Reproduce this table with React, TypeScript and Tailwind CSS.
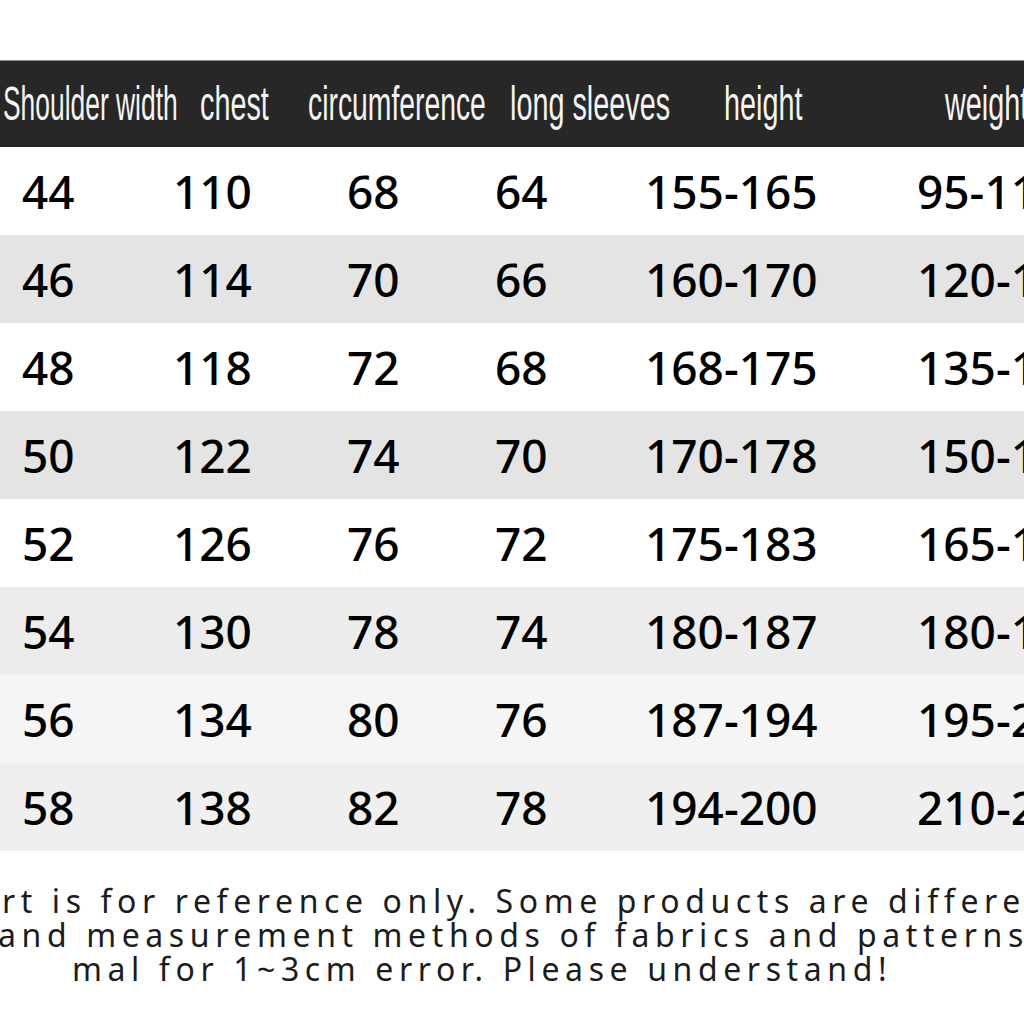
import React from 'react';

// Size chart (cropped view of a wider table)

const headers = [
  { label: 'Shoulder width', cell: 'w-[197px]', scale: 'scale-x-[0.55]' },
  { label: 'chest', cell: 'w-[108px]', scale: 'scale-x-[0.6]' },
  { label: 'circumference', cell: 'w-[202px]', scale: 'scale-x-[0.59]' },
  { label: 'long sleeves', cell: 'w-[214px]', scale: 'scale-x-[0.6]' },
  { label: 'height', cell: 'w-[221px]', scale: 'scale-x-[0.6]' },
  { label: 'weight', cell: 'w-[200px]', scale: 'scale-x-[0.6]' },
];

const colWidths = ['w-[151px]', 'w-[174px]', 'w-[148px]', 'w-[150px]', 'w-[272px]', 'w-[200px]'];

const rows = [
  { bg: 'bg-white', cells: ['44', '110', '68', '64', '155-165', '95-110'] },
  { bg: 'bg-[#e4e4e4]', cells: ['46', '114', '70', '66', '160-170', '120-135'] },
  { bg: 'bg-white', cells: ['48', '118', '72', '68', '168-175', '135-150'] },
  { bg: 'bg-[#e4e4e4]', cells: ['50', '122', '74', '70', '170-178', '150-165'] },
  { bg: 'bg-white', cells: ['52', '126', '76', '72', '175-183', '165-180'] },
  { bg: 'bg-[#ececec]', cells: ['54', '130', '78', '74', '180-187', '180-195'] },
  { bg: 'bg-[#f5f5f5]', cells: ['56', '134', '80', '76', '187-194', '195-210'] },
  { bg: 'bg-[#efefef]', cells: ['58', '138', '82', '78', '194-200', '210-225'] },
];

export default function App() {
  return (
    <div className="w-[1024px] h-[1024px] overflow-hidden bg-white">
      <div className="h-[60px]" />

      {/* header bar */}
      <div className="flex items-center h-[87px] pl-[3px] bg-[#272727] border-t border-[#8c8c8c] whitespace-nowrap">
        {headers.map(h => (
          <div key={h.label} className={`${h.cell} shrink-0`}>
            <span
              className={`inline-block origin-left ${h.scale} text-[48px] leading-none text-[#f4f4f4] [font-family:'Liberation_Sans',Arial,sans-serif]`}
            >
              {h.label}
            </span>
          </div>
        ))}
      </div>

      {/* table body */}
      <div>
        {rows.map(r => (
          <div key={r.cells[0]} className={`flex items-center h-[88px] pl-[22px] ${r.bg} whitespace-nowrap`}>
            {r.cells.map((c, i) => (
              <div
                key={i}
                className={`${colWidths[i]} shrink-0 text-[46px] font-medium leading-none text-black [font-family:'Noto_Sans',sans-serif]`}
              >
                {c}
              </div>
            ))}
          </div>
        ))}
      </div>

      {/* note */}
      <div className="pt-[33px] text-[32px] leading-[34px] tracking-[5.6px] text-[#1c1c1c] whitespace-nowrap [font-family:'Noto_Sans',sans-serif]">
        <p className="-ml-[68px]">chart is for reference only. Some products are different due to</p>
        <p className="-ml-[2px]">and measurement methods of fabrics and patterns, it is nor</p>
        <p className="pl-[72px]">mal for 1~3cm error. Please understand!</p>
      </div>
    </div>
  );
}
